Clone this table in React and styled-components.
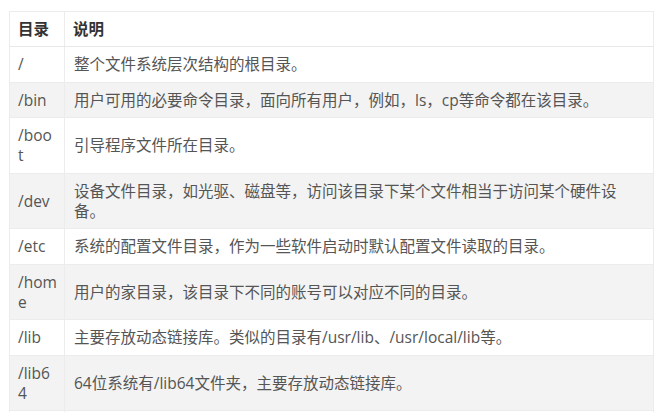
import React from "react";
import styled, { createGlobalStyle, css } from "styled-components";

const GlobalStyle = createGlobalStyle`
  body {
    margin: 0;
    background: #fff;
    font-family: "Open Sans", "Noto Sans CJK SC", sans-serif;
  }
`;

const Page = styled.div`
  padding: 11px 0 0 9px;
`;

const Table = styled.table`
  width: 645px;
  border-collapse: collapse;
  table-layout: fixed;
  border: 1px solid #ececec;
  font-size: 15.5px;
  line-height: 20px;
  color: #555;
`;

const NameCol = styled.col`
  width: 55px;
`;

const HeadCell = styled.th`
  text-align: left;
  font-weight: bold;
  color: #333;
  padding: 7px 6px 7px 8px;
  border-bottom: 1px solid #e8e8e8;
  & + & {
    border-left: 1px solid #ececec;
  }
`;

const Row = styled.tr`
  background: #fff;
  ${({ $striped }) =>
    $striped &&
    css`
      background: #f3f3f3;
    `}
`;

const Cell = styled.td`
  padding: 7px 6px 7.5px 8px;
  vertical-align: middle;
  word-break: break-all;
  border-bottom: 1px solid #ececec;
  & + & {
    border-left: 1px solid #ececec;
    padding-left: 9px;
  }
`;

const DirName = styled.div`
  width: 39.1px;
`;

const rows = [
  ["/", "整个文件系统层次结构的根目录。"],
  ["/bin", "用户可用的必要命令目录，面向所有用户，例如，ls，cp等命令都在该目录。"],
  ["/boot", "引导程序文件所在目录。"],
  ["/dev", "设备文件目录，如光驱、磁盘等，访问该目录下某个文件相当于访问某个硬件设备。"],
  ["/etc", "系统的配置文件目录，作为一些软件启动时默认配置文件读取的目录。"],
  ["/home", "用户的家目录，该目录下不同的账号可以对应不同的目录。"],
  ["/lib", "主要存放动态链接库。类似的目录有/usr/lib、/usr/local/lib等。"],
  ["/lib64", "64位系统有/lib64文件夹，主要存放动态链接库。"],
  ["/media", "可移除媒体（如CD-ROM）的挂载点。"],
];

function App() {
  return (
    <Page>
      <GlobalStyle />
      <Table>
        <colgroup>
          <NameCol />
          <col />
        </colgroup>
        <thead>
          <tr>
            <HeadCell>目录</HeadCell>
            <HeadCell>说明</HeadCell>
          </tr>
        </thead>
        <tbody>
          {rows.map(([dir, desc], index) => (
            <Row key={dir} $striped={index % 2 === 1}>
              <Cell>
                <DirName>{dir}</DirName>
              </Cell>
              <Cell>{desc}</Cell>
            </Row>
          ))}
        </tbody>
      </Table>
    </Page>
  );
}

export default App;
